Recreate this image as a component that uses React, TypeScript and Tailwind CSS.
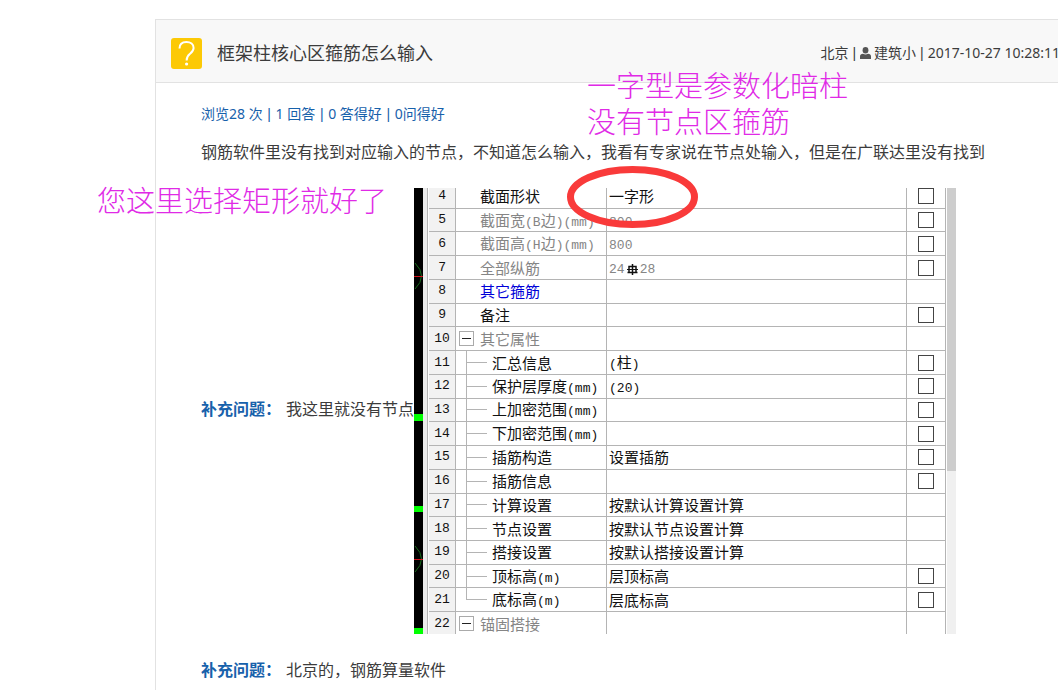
import type { ReactNode } from "react";

type Row = {
  no: number;
  name: string;
  value?: ReactNode;
  check?: boolean;
  tone?: "muted" | "link";
  kind?: "group" | "child" | "last";
};

function RebarMark() {
  return (
    <svg
      className="mx-[2px] inline-block h-[11px] w-[11px] align-[-2px]"
      viewBox="0 0 11 11"
      fill="none"
      stroke="#111"
      aria-hidden="true"
    >
      <path d="M5.5 0V11M0.5 8.5H10.5" strokeWidth="1.5" />
      <path d="M2 8.5V2.5H9V8.5" strokeWidth="1.5" />
      <path d="M0 5.5H11" strokeWidth="1" />
    </svg>
  );
}

const rows: Row[] = [
  { no: 4, name: "截面形状", value: "一字形", check: true },
  { no: 5, name: "截面宽(B边)(mm)", value: "800", check: true, tone: "muted" },
  { no: 6, name: "截面高(H边)(mm)", value: "800", check: true, tone: "muted" },
  {
    no: 7,
    name: "全部纵筋",
    value: (
      <span className="font-['Liberation_Mono',monospace] text-[13px] leading-none">
        24
        <RebarMark />
        28
      </span>
    ),
    check: true,
    tone: "muted",
  },
  { no: 8, name: "其它箍筋", tone: "link" },
  { no: 9, name: "备注", check: true },
  { no: 10, name: "其它属性", tone: "muted", kind: "group" },
  { no: 11, name: "汇总信息", value: "(柱)", check: true, kind: "child" },
  { no: 12, name: "保护层厚度(mm)", value: "(20)", check: true, kind: "child" },
  { no: 13, name: "上加密范围(mm)", check: true, kind: "child" },
  { no: 14, name: "下加密范围(mm)", check: true, kind: "child" },
  { no: 15, name: "插筋构造", value: "设置插筋", check: true, kind: "child" },
  { no: 16, name: "插筋信息", check: true, kind: "child" },
  { no: 17, name: "计算设置", value: "按默认计算设置计算", kind: "child" },
  { no: 18, name: "节点设置", value: "按默认节点设置计算", kind: "child" },
  { no: 19, name: "搭接设置", value: "按默认搭接设置计算", kind: "child" },
  { no: 20, name: "顶标高(m)", value: "层顶标高", check: true, kind: "child" },
  { no: 21, name: "底标高(m)", value: "层底标高", check: true, kind: "last" },
  { no: 22, name: "锚固搭接", tone: "muted", kind: "group" },
];

// Latin runs are set in a narrower mono face than the Chinese around them
function Mixed({ text }: { text: string }) {
  return (
    <span>
      {text.split(/([\x21-\x7e]+)/).map((part, i) =>
        i % 2 ? (
          <span
            key={i}
            className="font-['Liberation_Mono',monospace] text-[13px] leading-none"
          >
            {part}
          </span>
        ) : (
          part
        ),
      )}
    </span>
  );
}

function NameCell({ row }: { row: Row }) {
  if (row.kind === "child" || row.kind === "last") {
    return (
      <div className="flex h-full items-center pl-[10px]">
        <span
          className={
            row.kind === "last"
              ? "h-1/2 w-px self-start bg-[#b4b4b4]"
              : "w-px self-stretch bg-[#b4b4b4]"
          }
        />
        <span className="mr-[5px] h-px w-5 bg-[#b4b4b4]" />
        <Mixed text={row.name} />
      </div>
    );
  }

  if (row.kind === "group") {
    return (
      <div className="flex h-full items-center pl-[3px]">
        <button
          type="button"
          aria-label={row.name}
          className="mr-[6px] flex h-[15px] w-[15px] items-center justify-center border border-[#aaa] bg-white"
        >
          <span className="h-px w-[9px] bg-[#222]" />
        </button>
        <Mixed text={row.name} />
      </div>
    );
  }

  return (
    <div className="flex h-full items-center pl-6">
      <Mixed text={row.name} />
    </div>
  );
}

function toneClass(tone?: Row["tone"]) {
  if (tone === "muted") return "text-[#858585]";
  if (tone === "link") return "text-[#0000d8]";
  return "text-[#111]";
}

function PropertyTable() {
  return (
    <table className="-mt-[3px] h-[451px] w-[517px] table-fixed border-separate border-spacing-0 text-[15px] leading-[16px]">
      <colgroup>
        <col className="w-[27px]" />
        <col className="w-[151px]" />
        <col />
        <col className="w-[39px]" />
      </colgroup>
      <tbody>
        {rows.map((row) => (
          <tr key={row.no} className={toneClass(row.tone)}>
            <th className="h-[23px] border-r border-b border-[#b4b4b4] bg-[#f2f2f2] p-0 text-center font-['Liberation_Mono',monospace] text-[13px] font-medium text-[#111]">
              {row.no}
            </th>
            <td className="h-[23px] border-r border-b border-[#b4b4b4] p-0 whitespace-nowrap">
              <NameCell row={row} />
            </td>
            <td className="border-r border-b border-[#b4b4b4] p-0 pl-[2px] whitespace-nowrap">
              {typeof row.value === "string" ? <Mixed text={row.value} /> : row.value}
            </td>
            <td className="border-r border-b border-[#b4b4b4] p-0">
              {row.check && (
                <input
                  type="checkbox"
                  aria-label={row.name}
                  className="mx-auto block h-4 w-4 appearance-none border border-[#444] bg-white"
                />
              )}
            </td>
          </tr>
        ))}
      </tbody>
    </table>
  );
}

function DrawingStrip() {
  return (
    <svg className="h-[446px] w-[9px] shrink-0" viewBox="0 0 9 446" fill="none" aria-hidden="true">
      <rect width="9" height="446" fill="#000" />
      <g stroke="#176b1b">
        <path d="M1 75Q14 88 1 101" />
        <path d="M1 358Q14 371 1 384" />
      </g>
      <path d="M0 88.5H9M0 371.5H9" stroke="#d0111b" />
      <path d="M0 226H9V233H0ZM0 318H9V324H0ZM0 440H9V446H0Z" fill="#0f0" />
    </svg>
  );
}

function Screenshot() {
  return (
    <div className="relative shrink-0">
      <div className="flex h-[446px] overflow-hidden bg-white">
        <DrawingStrip />
        <div className="mr-px w-[5px] border-r border-[#b4b4b4] bg-[#ececec]" />
        <PropertyTable />
        <div className="ml-px w-[9px] bg-[#f0f0f0]">
          <div className="h-[283px] bg-[#cdcdcd]" />
        </div>
      </div>
      <svg
        className="absolute -top-[22px] left-[152px] h-[62px] w-[132px]"
        viewBox="0 0 132 62"
        fill="none"
        aria-hidden="true"
      >
        <ellipse cx="66.5" cy="31" rx="62" ry="27.5" stroke="#f93a3a" strokeWidth="7" />
      </svg>
    </div>
  );
}

function Bar() {
  return <span className="mx-px font-['Liberation_Sans',sans-serif]">|</span>;
}

function Supplement({ children }: { children: ReactNode }) {
  return (
    <p className="shrink-0 pb-1 whitespace-nowrap">
      <b className="mr-[5px] font-bold text-[#1761ab]">补充问题：</b>
      {children}
    </p>
  );
}

export default function App() {
  return (
    <div className="relative min-h-screen overflow-hidden bg-white pt-[19px] font-['Noto_Sans','Noto_Sans_CJK_SC',sans-serif] text-[#3c3c3c]">
      <main className="-mr-5 ml-[155px] min-h-[671px] border-t border-l border-[#e2e2e2]">
        <header className="flex h-[63px] items-center border-b border-[#e2e2e2] bg-[#f8f8f8] pt-1 pr-[18px] pl-[15px]">
          <svg className="h-[31px] w-[31px] shrink-0" viewBox="0 0 31 31" fill="none" aria-hidden="true">
            <rect width="31" height="31" rx="3" fill="#fcc905" />
            <path
              d="M8.5 10.5C8.5 6.2 11.3 4 15.4 4C19.6 4 22.6 6.3 22.6 10C22.6 12.8 20.9 14.2 19 15.8C16.9 17.5 15.6 18.8 15.6 22.5"
              stroke="#fff"
              strokeWidth="2"
            />
            <circle cx="15.6" cy="26" r="1.6" fill="#fff" />
          </svg>
          <h1 className="ml-[15px] text-lg whitespace-nowrap">框架柱核心区箍筋怎么输入</h1>
          <div className="ml-auto flex items-center gap-[3px] text-sm whitespace-nowrap">
            <span>北京</span>
            <Bar />
            <svg className="h-3 w-[11px]" viewBox="0 0 11 12" fill="#555" aria-hidden="true">
              <ellipse cx="5.5" cy="3.2" rx="2.9" ry="3.2" />
              <path d="M0 12V9.5C0 7.8 1.2 7 3 6.8Q5.5 8.3 8 6.8C9.8 7 11 7.8 11 9.5V12Z" />
            </svg>
            <span>建筑小</span>
            <Bar />
            <time>2017-10-27 10:28:11</time>
          </div>
        </header>

        <div className="pl-[45px] text-base leading-6">
          <p className="pt-[19px] text-sm leading-6 text-[#1761ab]">
            浏览28 次 <Bar /> 1 回答 <Bar /> 0 答得好 <Bar /> 0问得好
          </p>
          <p className="mt-[14px] whitespace-nowrap">
            钢筋软件里没有找到对应输入的节点，不知道怎么输入，我看有专家说在节点处输入，但是在广联达里没有找到
          </p>
          <div className="mt-6 flex items-center">
            <Supplement>我这里就没有节点</Supplement>
            <Screenshot />
          </div>
          <div className="mt-6">
            <Supplement>北京的，钢筋算量软件</Supplement>
          </div>
        </div>
      </main>

      {/* handwritten-style remarks laid over the page */}
      <p className="absolute top-[68px] left-[587px] text-[29px] leading-9 font-light whitespace-nowrap text-[#e02ae6]">
        一字型是参数化暗柱
        <br />
        没有节点区箍筋
      </p>
      <p className="absolute top-[183px] left-[97px] text-[29px] leading-9 font-light whitespace-nowrap text-[#e02ae6]">
        您这里选择矩形就好了
      </p>
    </div>
  );
}
